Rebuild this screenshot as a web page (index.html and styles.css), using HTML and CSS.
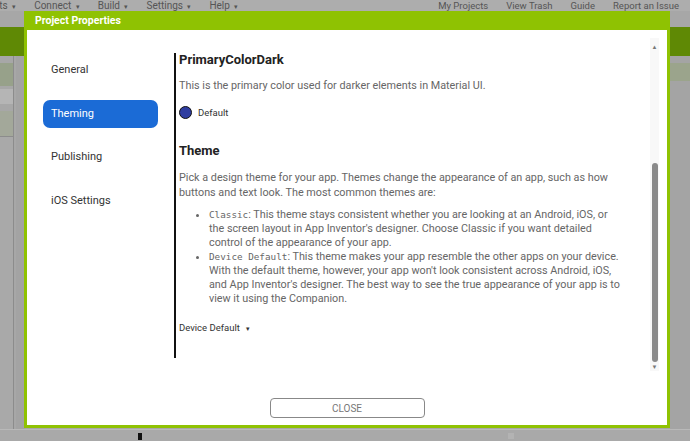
FILE: index.html
```html
<!DOCTYPE html>
<html lang="en">
<head>
  <meta charset="UTF-8">
  <title>Project Properties</title>
  <link rel="stylesheet" href="styles.css">
</head>
<body>
  <div class="topbar">
    <div class="menus">
      <span class="menu">Projects <small>▾</small></span>
      <span class="menu">Connect <small>▾</small></span>
      <span class="menu">Build <small>▾</small></span>
      <span class="menu">Settings <small>▾</small></span>
      <span class="menu">Help <small>▾</small></span>
    </div>
    <div class="links">
      <span>My Projects</span>
      <span>View Trash</span>
      <span>Guide</span>
      <span>Report an Issue</span>
    </div>
  </div>
  <div class="toolbar"></div>
  <div class="workspace">
    <div class="palette">
      <div class="pal-head"></div>
      <div class="pal-search"></div>
      <div class="pal-group"></div>
      <div class="pal-list"></div>
    </div>
    <div class="stage"></div>
    <div class="props">
      <div class="props-head"></div>
    </div>
  </div>
  <div class="statusbar">
    <span class="mark-dark"></span>
    <span class="mark-light"></span>
  </div>

  <div class="dialog">
    <div class="dialog-title">Project Properties</div>
    <div class="dialog-body">
      <div class="dialog-main">
        <ul class="nav">
          <li>General</li>
          <li class="active">Theming</li>
          <li>Publishing</li>
          <li>iOS Settings</li>
        </ul>
        <div class="panel-wrap">
          <div class="panel">
            <h3 class="prop-title">PrimaryColorDark</h3>
            <p class="prop-desc">This is the primary color used for darker elements in Material UI.</p>
            <div class="color-pick">
              <span class="swatch"></span>
              <span>Default</span>
            </div>

            <h3 class="prop-title theme-title">Theme</h3>
            <p class="prop-desc theme-desc">Pick a design theme for your app. Themes change the appearance of an app, such as how buttons and text look. The most common themes are:</p>
            <ul class="theme-list">
              <li><code>Classic</code>: This theme stays consistent whether you are looking at an Android, iOS, or the screen layout in App Inventor's designer. Choose Classic if you want detailed control of the appearance of your app.</li>
              <li><code>Device Default</code>: This theme makes your app resemble the other apps on your device. With the default theme, however, your app won't look consistent across Android, iOS, and App Inventor's designer. The best way to see the true appearance of your app is to view it using the Companion.</li>
            </ul>
            <div class="choice">Device Default <span class="caret">▾</span></div>
          </div>
        </div>
        <div class="scrollbar">
          <span class="arrow arrow-up">▲</span>
          <span class="thumb"></span>
          <span class="arrow arrow-down">▼</span>
        </div>
      </div>
      <div class="dialog-foot">
        <button class="btn-close">CLOSE</button>
      </div>
    </div>
  </div>
</body>
</html>
```

FILE: styles.css
```css
body {
  margin: 0;
  font-family: Roboto, "Liberation Sans", sans-serif;
  background: #a7a7a7;
  width: 690px;
  height: 441px;
  overflow: hidden;
  position: relative;
}
.topbar {
  height: 11px;
  background: #adadad;
  display: flex;
  justify-content: space-between;
  font-size: 10px;
  line-height: 11px;
  color: #555;
  overflow: hidden;
}
.topbar small {
  font-size: 7px;
  margin-left: 2px;
}
.menus {
  display: flex;
  gap: 18px;
  margin-left: -29px;
}
.links {
  display: flex;
  gap: 18px;
  margin-right: 11px;
  font-size: 9.5px;
}
.toolbar {
  height: 29px;
  margin-top: 16px;
  background: #5f8905;
}
.workspace {
  display: flex;
  height: 373px;
}
.palette {
  width: 13px;
  border-right: 1px solid #8c8c8c;
  display: flex;
  flex-direction: column;
}
.pal-head {
  height: 23px;
  margin-top: 7px;
  background: #97a18a;
}
.pal-search {
  height: 15px;
  margin-top: 3px;
  background: #b5b5b5;
}
.pal-group {
  height: 25px;
  margin-top: 7px;
  background: #a3a89a;
}
.pal-list {
  flex: 1;
  border-top: 1px solid #8c8c8c;
  background: #a9a9a9;
}
.stage {
  width: 9px;
  margin-left: 2px;
  background: #a3a3a3;
}
.props {
  margin-left: auto;
  width: 20px;
  background: #a4a4a4;
}
.props-head {
  height: 18px;
  margin-top: 7px;
  background: #9ba48c;
}
.statusbar {
  height: 12px;
  background: #a9a9a9;
  border-top: 1px solid #b9b9b9;
  display: flex;
  align-items: center;
}
.mark-dark {
  width: 4px;
  height: 7px;
  background: #111;
  margin-left: 138px;
}
.mark-light {
  width: 6px;
  height: 6px;
  background: #b3b3b3;
  margin-left: 366px;
}

.dialog {
  position: absolute;
  left: 24px;
  top: 11px;
  width: 646px;
}
.dialog-title {
  height: 19px;
  background: #8fc202;
  color: white;
  font-weight: bold;
  font-size: 10.5px;
  line-height: 19px;
  padding-left: 11px;
}
.dialog-body {
  height: 398px;
  box-sizing: border-box;
  border: 3px solid #8fc202;
  border-top: none;
  background: white;
}
.dialog-main {
  display: flex;
  height: 345px;
}
.nav {
  list-style: none;
  margin: 0;
  padding: 26px 0 0 16px;
  width: 131px;
  display: flex;
  flex-direction: column;
  gap: 15.5px;
}
.nav li {
  width: 115px;
  height: 28px;
  line-height: 28px;
  padding-left: 8px;
  box-sizing: border-box;
  font-size: 11px;
  color: #333;
  border-radius: 7px;
}
.nav li.active {
  background: #1b6bd6;
  color: white;
}
.panel-wrap {
  flex: 1;
  padding-top: 23px;
}
.panel {
  height: 305px;
  border-left: 2px solid #111;
  padding-left: 3px;
  padding-right: 20px;
  overflow: hidden;
}
.prop-title {
  margin: 0;
  font-size: 13px;
  line-height: 14px;
  font-weight: bold;
  color: #222;
}
.prop-desc {
  margin: 11px 0 0;
  font-size: 10.8px;
  line-height: 15px;
  color: #666;
}
.color-pick {
  display: flex;
  align-items: center;
  gap: 6px;
  margin-top: 12px;
  height: 14px;
  font-size: 9.5px;
  color: #333;
}
.swatch {
  width: 11px;
  height: 11px;
  border-radius: 50%;
  background: #2f3da0;
  border: 1.5px solid #111;
}
.theme-title {
  margin-top: 25px;
}
.theme-desc {
  margin-top: 12px;
}
.theme-list {
  margin: 8px 0 0;
  padding-left: 30px;
  font-size: 10.8px;
  line-height: 14px;
  color: #666;
}
.theme-list code {
  font-family: "DejaVu Sans Mono", monospace;
  font-size: 9.3px;
}
.choice {
  margin-top: 15px;
  font-size: 9.5px;
  line-height: 13px;
  color: #333;
}
.caret {
  font-size: 7px;
  margin-left: 4px;
}
.scrollbar {
  width: 9px;
  height: 333px;
  margin: 8px 8px 0 5px;
  background: #f8f8f8;
  display: flex;
  flex-direction: column;
  align-items: center;
}
.arrow {
  font-size: 6px;
  color: #777;
}
.arrow-up {
  line-height: 18px;
}
.arrow-down {
  line-height: 9px;
}
.thumb {
  width: 6px;
  margin-top: auto;
  height: 199px;
  border-radius: 3px;
  background: #8a8a8a;
}
.dialog-foot {
  display: flex;
  justify-content: center;
  padding-top: 23px;
}
.btn-close {
  width: 155px;
  height: 20px;
  background: white;
  border: 1px solid #888;
  border-radius: 4px;
  font-family: Roboto, "Liberation Sans", sans-serif;
  font-size: 10px;
  color: #777;
}
```
